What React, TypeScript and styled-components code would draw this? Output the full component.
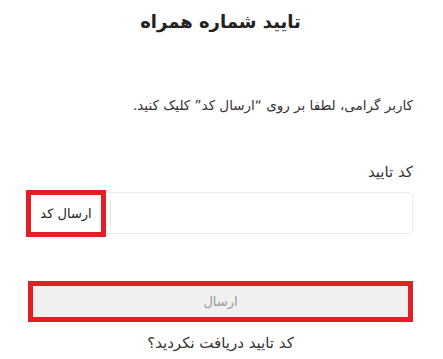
import React from 'react';
import styled, { createGlobalStyle } from 'styled-components';

const GlobalStyle = createGlobalStyle`
  html, body {
    margin: 0;
    padding: 0;
    background: #ffffff;
  }
  body {
    font-family: "DejaVu Sans", "Noto Sans", sans-serif;
  }
`;

const Page = styled.div`
  direction: rtl;
  display: flex;
  flex-direction: column;
  padding: 0 30px 0 28px;
  width: 443px;
  box-sizing: border-box;
`;

const Title = styled.h1`
  margin: 9px 0 0;
  font-size: 18px;
  line-height: 26px;
  font-weight: bold;
  color: #222;
  text-align: center;
`;

const Hint = styled.p`
  margin: 59px 0 0;
  font-size: 13.5px;
  line-height: 22px;
  color: #333;
`;

const Label = styled.label`
  margin-top: 45px;
  font-size: 15px;
  line-height: 22px;
  color: #333;
`;

const Group = styled.div`
  margin-top: 9px;
  height: 42px;
  display: flex;
  align-items: center;
  border: 1px solid #ebebeb;
  border-radius: 5px;
  box-sizing: border-box;
`;

const Field = styled.input`
  flex: 1;
  min-width: 0;
  height: 100%;
  border: none;
  outline: none;
  background: transparent;
  direction: rtl;
`;

const Divider = styled.span`
  width: 1px;
  height: 27px;
  background: #e4e4e4;
  margin-left: 4px;
`;

const Addon = styled.button`
  width: 80px;
  height: 47px;
  margin-left: -3px;
  box-sizing: border-box;
  border: 5px solid #e31e25;
  background: #ffffff;
  font-family: inherit;
  font-size: 13px;
  color: #222;
  padding: 0;
  cursor: pointer;
`;

const Submit = styled.button`
  margin-top: 47px;
  height: 41px;
  box-sizing: border-box;
  border: 5px solid #e31e25;
  background: #f0f0f0;
  font-family: inherit;
  font-size: 13px;
  color: #9a9a9a;
  cursor: default;
`;

const Resend = styled.p`
  margin: 10px 0 0;
  font-size: 15px;
  line-height: 22px;
  color: #333;
  text-align: center;
`;

export default function App() {
  return (
    <>
      <GlobalStyle />
      <Page>
        <Title>تایید شماره همراه</Title>
        <Hint>کاربر گرامی، لطفا بر روی “ارسال کد” کلیک کنید.</Hint>
        <Label htmlFor="code">کد تایید</Label>
        <Group>
          <Field id="code" type="text" />
          <Divider />
          <Addon type="button">ارسال کد</Addon>
        </Group>
        <Submit type="button" disabled>
          ارسال
        </Submit>
        <Resend>کد تایید دریافت نکردید؟</Resend>
      </Page>
    </>
  );
}
